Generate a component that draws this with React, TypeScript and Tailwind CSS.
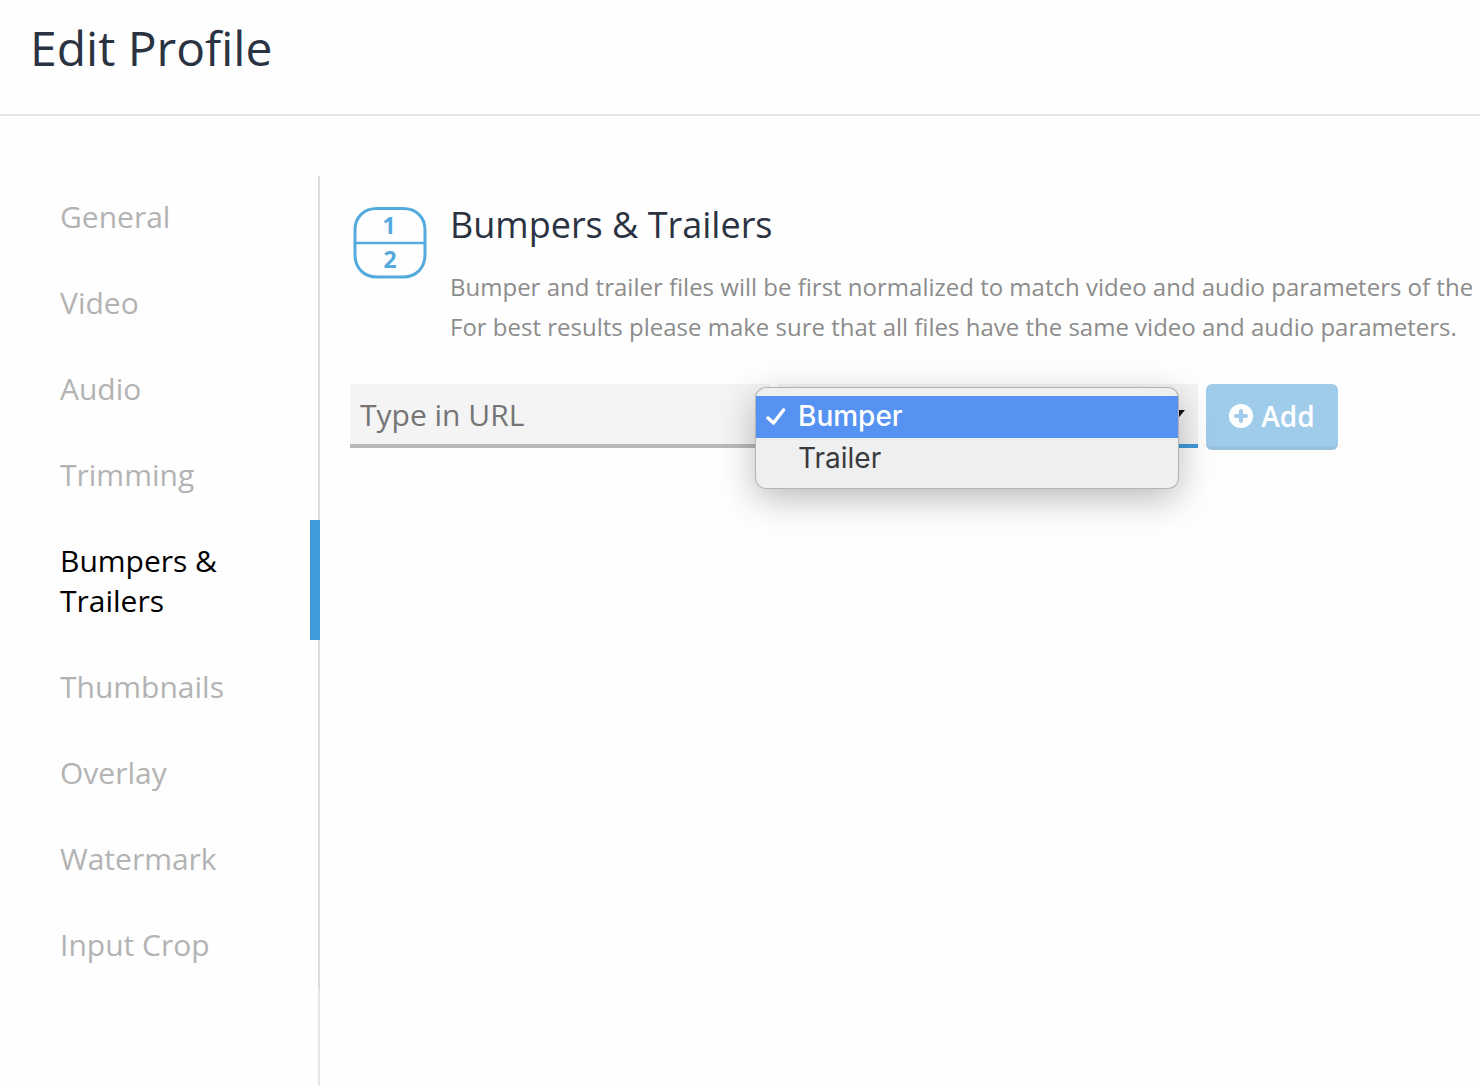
import { FC, useState } from "react";
import clsx from "clsx";

const SECTIONS = [
  "General",
  "Video",
  "Audio",
  "Trimming",
  "Bumpers & Trailers",
  "Thumbnails",
  "Overlay",
  "Watermark",
  "Input Crop",
];

const FILE_TYPES = ["Bumper", "Trailer"];

const BumpersIcon: FC = () => (
  <svg
    className="h-20 w-20 shrink-0"
    viewBox="0 0 80 80"
    fill="none"
    stroke="#54aadd"
    strokeWidth="3"
    aria-hidden
  >
    <path d="M27 7.500H53C66 7.500 75 16 75 29V54C75 67 66 76 53 76H27C14 76 5 67 5 54V29C5 16 14 7.500 27 7.500Z" />
    <path d="M5 42H75" strokeWidth="2.500" />
    <g
      className="font-['Noto_Sans',sans-serif] text-[23px] font-bold"
      fill="#54aadd"
      stroke="none"
      textAnchor="middle"
    >
      <text x="39" y="33">
        1
      </text>
      <text x="40" y="67">
        2
      </text>
    </g>
  </svg>
);

const PlusIcon: FC = () => (
  <svg className="h-6 w-6" viewBox="0 0 24 24" aria-hidden>
    <circle cx="12" cy="12" r="12" fill="currentColor" />
    <path
      d="M12 7V17M7 12H17"
      fill="none"
      stroke="#a0cceb"
      strokeWidth="4"
      strokeLinecap="round"
    />
  </svg>
);

const SideNav: FC = () => (
  <nav
    aria-label="Profile sections"
    className="flex w-80 shrink-0 flex-col self-stretch border-r-2 border-[#e6e6e6]"
  >
    <ul className="-mr-0.5 border-r-2 border-[#dcdcdc]">
      {SECTIONS.map((section) => {
        const active = section === "Bumpers & Trailers";
        return (
          <li key={section} className="-mr-0.5 pb-1.5">
            <a
              href="#"
              aria-current={active ? "page" : undefined}
              className={clsx(
                "block pt-[21px] pb-[19px] pl-15 text-[30px] leading-10",
                active
                  ? "border-r-10 border-[#419bd9] pr-16 text-black"
                  : "text-[#b3b3b3]",
              )}
            >
              {section}
            </a>
          </li>
        );
      })}
    </ul>
  </nav>
);

const TypeSelect: FC = () => {
  const [type, setType] = useState("Bumper");

  return (
    <div className="relative w-[420px]">
      <select
        aria-label="File type"
        value={type}
        onChange={(e) => setType(e.target.value)}
        className="h-16 w-full appearance-none border-b-4 border-[#419bd9] bg-[#f4f4f4] px-2.5 text-[30px] text-[#757575] outline-none"
      >
        {FILE_TYPES.map((option) => (
          <option key={option}>{option}</option>
        ))}
      </select>
      <svg
        className="pointer-events-none absolute top-6 right-3 h-3 w-4"
        viewBox="0 0 16 12"
        aria-hidden
      >
        <path d="M0 2H15L7.500 11Z" fill="#111" />
      </svg>
      <ul
        role="listbox"
        aria-label="File type options"
        className="absolute top-1 -left-[22px] w-[422px] rounded-[10px] bg-[#eeeff0] pt-2 pb-2 font-[Inter,sans-serif] text-[28px] leading-10 shadow-[0_0_0_1px_#b4b4b4,0_10px_36px_rgba(0,0,0,0.28)]"
      >
        {FILE_TYPES.map((option) => {
          const selected = option === type;
          return (
            <li
              key={option}
              role="option"
              aria-selected={selected}
              onClick={() => setType(option)}
              className={clsx(
                "flex h-[42px] items-start pl-2.5",
                selected
                  ? "bg-[#5692f1] font-medium text-white"
                  : "text-[#3a3a3c]",
              )}
            >
              <span className="flex h-10 w-8 items-center">
                {selected && (
                  <svg
                    className="h-5 w-5"
                    viewBox="0 0 20 20"
                    fill="none"
                    stroke="currentColor"
                    strokeWidth="3.500"
                    strokeLinecap="round"
                    strokeLinejoin="round"
                    aria-hidden
                  >
                    <path d="M2 12L7.500 17L17.500 4" />
                  </svg>
                )}
              </span>
              {option}
            </li>
          );
        })}
      </ul>
    </div>
  );
};

export default function App() {
  return (
    <div className="flex min-h-screen flex-col overflow-x-hidden bg-[#fefefe] font-['Open_Sans',sans-serif]">
      <header className="border-b-2 border-[#e5e5e5] px-[30px] pt-4 pb-[34px]">
        <h1 className="text-5xl leading-16 text-[#2b3342]">Edit Profile</h1>
      </header>
      <div className="flex flex-1 pt-15">
        <SideNav />
        <main className="min-w-0 flex-1 pl-[30px]">
          <section className="flex gap-5 pt-[25px]">
            <BumpersIcon />
            <div>
              <h2 className="text-4xl leading-12 text-[#2b3342]">
                Bumpers &amp; Trailers
              </h2>
              <p className="mt-[18px] text-2xl leading-10 whitespace-nowrap text-[#8c8c8c]">
                Bumper and trailer files will be first normalized to match video
                and audio parameters of the
                <br />
                For best results please make sure that all files have the same
                video and audio parameters.
              </p>
            </div>
          </section>
          <form
            className="mt-[37px] flex items-start gap-2"
            onSubmit={(e) => e.preventDefault()}
          >
            <input
              type="text"
              aria-label="File URL"
              placeholder="Type in URL"
              className="h-16 w-[420px] border-b-4 border-[#b9b9b9] bg-[#f4f4f4] px-2.5 text-[30px] outline-none placeholder:text-[#757575]"
            />
            <TypeSelect />
            <button
              type="submit"
              className="flex h-[66px] w-[132px] items-center justify-center gap-2 rounded-md border-b-4 border-[#98c1dd] bg-[#a0cceb] pt-0.5 text-[28px] font-semibold text-white"
            >
              <PlusIcon />
              Add
            </button>
          </form>
        </main>
      </div>
    </div>
  );
}
